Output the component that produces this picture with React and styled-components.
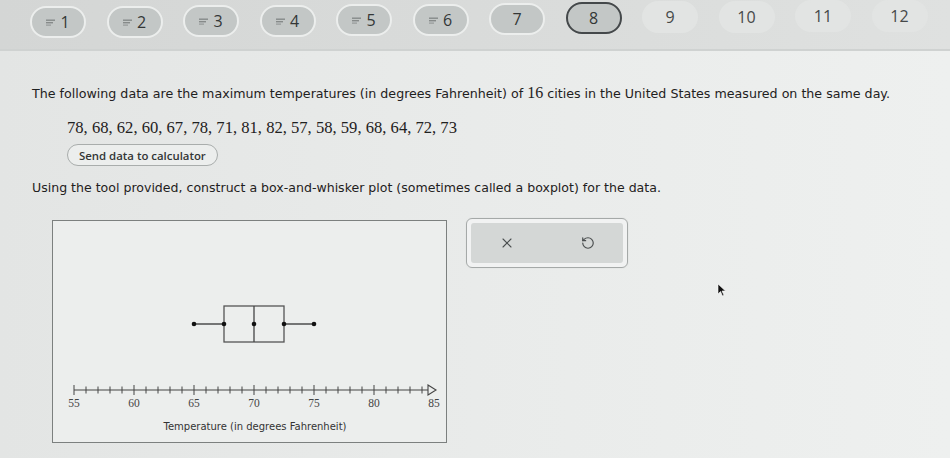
import React from "react";
import styled, { createGlobalStyle } from "styled-components";
import { X, RotateCcw } from "lucide-react";

const Global = createGlobalStyle`
  html, body { margin: 0; padding: 0; }
  body {
    width: 950px; height: 458px; overflow: hidden;
    background: #e8eae9;
    font-family: "DejaVu Sans", Verdana, sans-serif;
  }
`;

const Page = styled.div`
  position: relative;
  width: 950px;
  height: 458px;
  background: linear-gradient(90deg, #e3e5e4 0%, #e9ebea 50%, #eef0ef 100%);
`;

const Nav = styled.nav`
  height: 51px;
  display: flex;
  align-items: flex-start;
  gap: 20.5px;
  padding: 4px 0 0 30px;
  box-sizing: border-box;
  background: linear-gradient(90deg, #d4d6d5 0%, #dadcdb 60%, #dfe1e0 100%);
  border-bottom: 2px solid #cfd2d1;
`;

const Pill = styled.div`
  width: 56px;
  height: 32px;
  box-sizing: border-box;
  border-radius: 16px;
  display: flex;
  align-items: center;
  justify-content: center;
  gap: 5px;
  font-family: "Open Sans", Lato, sans-serif;
  font-size: 16px;
  color: ${(p) => (p.$done || p.$active ? "#343737" : "#464949")};
  background: ${(p) => (p.$done || p.$active ? "#c3c7c6" : "#e2e4e3")};
  border: ${(p) =>
    p.$active ? "2px solid #44484a" : p.$done ? "2px solid #eceeed" : "2px solid #e2e4e3"};
  margin-top: ${(p) => p.$dy || 0}px;
`;

const Main = styled.main`
  padding: 34px 0 0 32px;
`;

const Prompt = styled.p`
  margin: 0;
  font-size: 12.65px;
  line-height: 16px;
  color: #1f2121;
`;

const SerifNum = styled.span`
  font-family: "Liberation Serif", "Times New Roman", serif;
  font-size: 16px;
`;

const DataBlock = styled.div`
  padding: 17px 0 0 35px;
  display: flex;
  flex-direction: column;
  align-items: flex-start;
  gap: 7px;
`;

const DataLine = styled.div`
  font-family: "Liberation Serif", "Times New Roman", serif;
  font-size: 16.6px;
  line-height: 18px;
  color: #1f2121;
`;

const SendButton = styled.button`
  height: 22px;
  padding: 0 11px;
  border-radius: 11px;
  border: 1px solid #a9adac;
  background: #eceeed;
  font-family: "Open Sans", sans-serif;
  font-weight: 600;
  font-size: 11.4px;
  color: #333636;
  cursor: pointer;
`;

const Instruction = styled(Prompt)`
  margin-top: 14px;
  font-size: 12.55px;
`;

const Workspace = styled.div`
  display: flex;
  align-items: flex-start;
  gap: 19px;
  margin: 24px 0 0 20px;
`;

const PlotFrame = styled.div`
  width: 395px;
  height: 223px;
  box-sizing: border-box;
  border: 1.5px solid #7c807f;
  background: #eceeed;
`;

const Tools = styled.div`
  margin-top: -2px;
  width: 162px;
  height: 50px;
  box-sizing: border-box;
  padding: 4px;
  border-radius: 6px;
  border: 1.5px solid #a5a9a8;
  background: #f1f2f2;
  box-shadow: 0 0 0 1px #e6e8e7;
`;

const ToolInner = styled.div`
  height: 100%;
  border-radius: 3px;
  background: #d4d7d6;
  display: flex;
  align-items: center;
  justify-content: space-between;
  padding: 0 28px;
  color: #4a4e4f;
`;

const Cursor = styled.svg`
  position: absolute;
  left: 717px;
  top: 283px;
`;

const MiniIcon = () => (
  <svg width="9" height="7" viewBox="0 0 9 7">
    <rect x="0" y="0.5" width="9" height="1.4" fill="#868a89" />
    <rect x="0" y="3" width="7" height="1.4" fill="#868a89" />
    <rect x="0" y="5.5" width="5" height="1.2" fill="#969a99" />
  </svg>
);

const Plot = () => {
  const x = (v) => 21 + (v - 55) * 12;
  const axisY = 169;
  const ticks = [];
  for (let v = 55; v <= 84; v++) ticks.push(v);
  const labels = [55, 60, 65, 70, 75, 80, 85];
  const wy = 103;
  return (
    <svg width="392" height="220" viewBox="0 0 392 220">
      <line x1={x(65)} y1={wy} x2={x(67.5)} y2={wy} stroke="#333" strokeWidth="1.3" />
      <line x1={x(72.5)} y1={wy} x2={x(75)} y2={wy} stroke="#333" strokeWidth="1.3" />
      <rect x={x(67.5)} y={wy - 18} width={x(72.5) - x(67.5)} height={36} fill="none" stroke="#555" strokeWidth="1.3" />
      <line x1={x(70)} y1={wy - 18} x2={x(70)} y2={wy + 18} stroke="#444" strokeWidth="1.3" />
      {[65, 67.5, 70, 72.5, 75].map((v) => (
        <circle key={v} cx={x(v)} cy={wy} r="2.3" fill="#111" />
      ))}
      <line x1={x(55)} y1={axisY} x2={x(85) - 4} y2={axisY} stroke="#444" strokeWidth="1.2" />
      {ticks.map((v) => (
        <line key={v} x1={x(v)} y1={axisY - (v % 5 === 0 ? 5 : 3.5)} x2={x(v)} y2={axisY + (v % 5 === 0 ? 5 : 3.5)} stroke="#444" strokeWidth="1" />
      ))}
      <path d={`M${x(85) - 6} ${axisY - 5} L${x(85) + 2} ${axisY} L${x(85) - 6} ${axisY + 5} Z`} fill="#eceeed" stroke="#444" strokeWidth="1.1" />
      {labels.map((v) => (
        <text key={v} x={x(v)} y={axisY + 17} textAnchor="middle" fontFamily="'Liberation Serif', serif" fontSize="11.5" fill="#444">
          {v}
        </text>
      ))}
      <text x={x(70) + 1} y={axisY + 40} textAnchor="middle" fontFamily="'DejaVu Sans', sans-serif" fontSize="10" fill="#333">
        Temperature (in degrees Fahrenheit)
      </text>
    </svg>
  );
};

const pills = [
  { n: 1, done: true, dy: 2 },
  { n: 2, done: true, dy: 2 },
  { n: 3, done: true, dy: 1 },
  { n: 4, done: true, dy: 1 },
  { n: 5, done: true, dy: 0 },
  { n: 6, done: true, dy: 0 },
  { n: 7, done: true, dy: -1 },
  { n: 8, active: true, dy: -2 },
  { n: 9, dy: -3 },
  { n: 10, dy: -3 },
  { n: 11, dy: -4 },
  { n: 12, dy: -4 },
];

export default function App() {
  return (
    <Page>
      <Global />
      <Nav>
        {pills.map((p) => (
          <Pill key={p.n} $done={p.done} $active={p.active} $dy={p.dy}>
            {p.n <= 6 && <MiniIcon />}
            {p.n}
          </Pill>
        ))}
      </Nav>
      <Main>
        <Prompt>
          The following data are the maximum temperatures (in degrees Fahrenheit) of <SerifNum>16</SerifNum> cities in the United States measured on the same day.
        </Prompt>
        <DataBlock>
          <DataLine>78, 68, 62, 60, 67, 78, 71, 81, 82, 57, 58, 59, 68, 64, 72, 73</DataLine>
          <SendButton>Send data to calculator</SendButton>
        </DataBlock>
        <Instruction>
          Using the tool provided, construct a box-and-whisker plot (sometimes called a boxplot) for the data.
        </Instruction>
        <Workspace>
          <PlotFrame>
            <Plot />
          </PlotFrame>
          <Tools>
            <ToolInner>
              <X size={16} strokeWidth={1.6} />
              <RotateCcw size={14} strokeWidth={2} />
            </ToolInner>
          </Tools>
        </Workspace>
      </Main>
      <Cursor width="10" height="14" viewBox="0 0 10 14">
        <path d="M1 1 L1 11 L3.5 8.5 L5.5 13 L7 12.3 L5 8 L8.5 8 Z" fill="#111" stroke="#fff" strokeWidth="0.6" />
      </Cursor>
    </Page>
  );
}
